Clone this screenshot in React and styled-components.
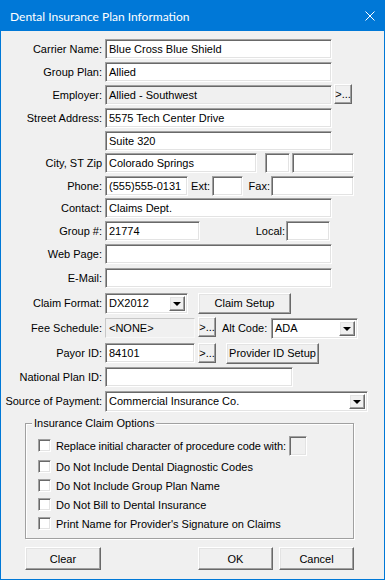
import React from "react";
import styled, { createGlobalStyle, css } from "styled-components";

const Global = createGlobalStyle`
  html, body { margin: 0; padding: 0; background: #f0f0f0; }
  * { box-sizing: border-box; }
  body { font-family: "Liberation Sans", Arial, sans-serif; font-size: 11px; color: #000; }
`;

const sunken = css`
  border-style: solid;
  border-width: 1px;
  border-color: #a0a0a0 #ffffff #ffffff #a0a0a0;
  box-shadow: inset 1px 1px 0 #696969, inset -1px -1px 0 #e3e3e3;
`;

const raised = css`
  border-style: solid;
  border-width: 1px;
  border-color: #ffffff #696969 #696969 #ffffff;
  box-shadow: inset -1px -1px 0 #a0a0a0, inset 1px 1px 0 #e3e3e3;
`;

const Window = styled.div`
  width: 385px;
  height: 580px;
  border: 1px solid #0078d7;
  background: #f0f0f0;
  display: flex;
  flex-direction: column;
  overflow: hidden;
`;

const TitleBar = styled.div`
  height: 30px;
  flex: none;
  background: #0078d7;
  color: #fff;
  display: flex;
  align-items: center;
  justify-content: space-between;
  padding: 0 9px 0 9px;
  font-family: "Segoe UI", Lato, "Noto Sans", sans-serif;
  font-size: 12px;
`;

const CloseIcon = styled.svg`
  width: 10px;
  height: 10px;
  display: block;
`;

const Body = styled.div`
  padding-top: 8px;
  display: flex;
  flex-direction: column;
`;

const Row = styled.div`
  display: flex;
  align-items: center;
  height: 20px;
  margin-top: ${(p) => p.$mt || 0}px;
`;

const Label = styled.div`
  width: 101px;
  flex: none;
  text-align: right;
  white-space: nowrap;
  margin-right: 3px;
`;

const InlineLabel = styled.div`
  width: ${(p) => p.$w}px;
  flex: none;
  white-space: nowrap;
  text-align: ${(p) => (p.$left ? "left" : "right")};
  padding: 0 ${(p) => p.$pr || 0}px 0 ${(p) => p.$pl || 0}px;
`;

const Field = styled.div`
  ${(p) =>
    p.$flat
      ? css`
          border: 1px solid;
          border-color: #c8c8c8 #f8f8f8 #f8f8f8 #c8c8c8;
        `
      : sunken}
  width: ${(p) => p.$w}px;
  height: ${(p) => p.$h || 20}px;
  flex: none;
  background: ${(p) => (p.$disabled ? "#f0f0f0" : "#ffffff")};
  margin-left: ${(p) => p.$ml || 0}px;
  padding: 0 3px;
  display: flex;
  align-items: center;
  white-space: nowrap;
  overflow: hidden;
`;

const Combo = styled.div`
  ${sunken}
  width: ${(p) => p.$w}px;
  height: ${(p) => p.$h || 21}px;
  flex: none;
  background: #fff;
  margin-left: ${(p) => p.$ml || 0}px;
  display: flex;
  align-items: stretch;
  padding: 2px;
`;

const ComboText = styled.div`
  flex: 1;
  display: flex;
  align-items: center;
  padding-left: 1px;
  white-space: nowrap;
`;

const ArrowButton = styled.div`
  ${raised}
  width: 16px;
  flex: none;
  background: #f0f0f0;
  display: flex;
  align-items: center;
  justify-content: center;
`;

const Arrow = styled.div`
  width: 0;
  height: 0;
  border-left: 4px solid transparent;
  border-right: 4px solid transparent;
  border-top: 4px solid #000;
  margin-top: 1px;
`;

const Button = styled.div`
  ${raised}
  width: ${(p) => p.$w}px;
  height: ${(p) => p.$h || 21}px;
  flex: none;
  background: #f0f0f0;
  margin-left: ${(p) => p.$ml || 0}px;
  margin-top: ${(p) => (p.$raise ? -p.$raise * 2 : 0)}px;
  display: flex;
  align-items: center;
  justify-content: center;
  white-space: nowrap;
`;

const Group = styled.fieldset`
  margin: 6px 0 0 24px;
  width: 329px;
  padding: 10px 0 8px 12px;
  border: 1px solid #a0a0a0;
  box-shadow: inset 1px 1px 0 #fff, 1px 1px 0 #fff;
  display: flex;
  flex-direction: column;
  gap: 6px;
`;

const Legend = styled.legend`
  padding: 0 2px;
  margin-left: -6px;
  background: #f0f0f0;
  font-size: 11px;
`;

const CheckRow = styled.div`
  display: flex;
  align-items: center;
  height: 13px;
  margin-top: ${(p) => p.$mt || 0}px;
`;

const CheckText = styled.span`
  white-space: nowrap;
  letter-spacing: ${(p) => (p.$tight ? "-0.1px" : "normal")};
`;

const Box = styled.div`
  ${sunken}
  width: 13px;
  height: 13px;
  flex: none;
  background: #fff;
  margin-right: 5px;
`;

const Footer = styled.div`
  display: flex;
  margin: 8px 0 0 24px;
`;

const FooterRight = styled.div`
  display: flex;
  gap: 6px;
  margin-left: 97px;
`;

const label = (t) => <Label>{t}</Label>;

export default function App() {
  return (
    <>
      <Global />
      <Window>
        <TitleBar>
          <span>Dental Insurance Plan Information</span>
          <CloseIcon viewBox="0 0 10 10">
            <path d="M0.5 0.5 L9.5 9.5 M9.5 0.5 L0.5 9.5" stroke="#fff" strokeWidth="1" />
          </CloseIcon>
        </TitleBar>
        <Body>
          <Row>
            {label("Carrier Name:")}
            <Field $w={227}>Blue Cross Blue Shield</Field>
          </Row>
          <Row $mt={3}>
            {label("Group Plan:")}
            <Field $w={227}>Allied</Field>
          </Row>
          <Row $mt={3}>
            {label("Employer:")}
            <Field $w={227} $disabled>Allied - Southwest</Field>
            <Button $w={18} $h={20} $ml={2} $raise={1}>&gt;...</Button>
          </Row>
          <Row $mt={3}>
            {label("Street Address:")}
            <Field $w={227}>5575 Tech Center Drive</Field>
          </Row>
          <Row $mt={3}>
            {label("")}
            <Field $w={227}>Suite 320</Field>
          </Row>
          <Row $mt={2}>
            {label("City, ST Zip")}
            <Field $w={152}>Colorado Springs</Field>
            <Field $w={25} $ml={8} />
            <Field $w={62} $ml={2} />
          </Row>
          <Row $mt={3}>
            {label("Phone:")}
            <Field $w={83}>(555)555-0131</Field>
            <InlineLabel $w={24} $pr={2}>Ext:</InlineLabel>
            <Field $w={31} />
            <InlineLabel $w={28} $pr={1}>Fax:</InlineLabel>
            <Field $w={83} />
          </Row>
          <Row $mt={2}>
            {label("Contact:")}
            <Field $w={227}>Claims Dept.</Field>
          </Row>
          <Row $mt={3}>
            {label("Group #:")}
            <Field $w={95}>21774</Field>
            <InlineLabel $w={86} $pr={1}>Local:</InlineLabel>
            <Field $w={44} />
          </Row>
          <Row $mt={3}>
            {label("Web Page:")}
            <Field $w={227} />
          </Row>
          <Row $mt={4}>
            {label("E-Mail:")}
            <Field $w={227} />
          </Row>
          <Row $mt={5}>
            {label("Claim Format:")}
            <Combo $w={83}>
              <ComboText>DX2012</ComboText>
              <ArrowButton><Arrow /></ArrowButton>
            </Combo>
            <Button $w={93} $ml={10}>Claim Setup</Button>
          </Row>
          <Row $mt={5}>
            {label("Fee Schedule:")}
            <Field $w={90} $flat $disabled>&lt;NONE&gt;</Field>
            <Button $w={18} $h={20} $ml={3} $raise={1}>&gt;...</Button>
            <InlineLabel $w={55} $left $pl={6}>Alt Code:</InlineLabel>
            <Combo $w={87}>
              <ComboText>ADA</ComboText>
              <ArrowButton><Arrow /></ArrowButton>
            </Combo>
          </Row>
          <Row $mt={5}>
            {label("Payor ID:")}
            <Field $w={90}>84101</Field>
            <Button $w={18} $h={20} $ml={3}>&gt;...</Button>
            <Button $w={93} $ml={10}>Provider ID Setup</Button>
          </Row>
          <Row $mt={4}>
            {label("National Plan ID:")}
            <Field $w={188} />
          </Row>
          <Row $mt={4}>
            {label("Source of Payment:")}
            <Combo $w={263}>
              <ComboText>Commercial Insurance Co.</ComboText>
              <ArrowButton><Arrow /></ArrowButton>
            </Combo>
          </Row>
          <Group>
            <Legend>Insurance Claim Options</Legend>
            <CheckRow>
              <Box />
              <CheckText $tight>Replace initial character of procedure code with:</CheckText>
              <Field $w={18} $h={20} $ml={3} $disabled />
            </CheckRow>
            <CheckRow $mt={2}>
              <Box />
              <CheckText>Do Not Include Dental Diagnostic Codes</CheckText>
            </CheckRow>
            <CheckRow>
              <Box />
              <CheckText>Do Not Include Group Plan Name</CheckText>
            </CheckRow>
            <CheckRow>
              <Box />
              <CheckText>Do Not Bill to Dental Insurance</CheckText>
            </CheckRow>
            <CheckRow>
              <Box />
              <CheckText>Print Name for Provider's Signature on Claims</CheckText>
            </CheckRow>
          </Group>
          <Footer>
            <Button $w={76} $h={23}>Clear</Button>
            <FooterRight>
              <Button $w={75} $h={23}>OK</Button>
              <Button $w={75} $h={23}>Cancel</Button>
            </FooterRight>
          </Footer>
        </Body>
      </Window>
    </>
  );
}
